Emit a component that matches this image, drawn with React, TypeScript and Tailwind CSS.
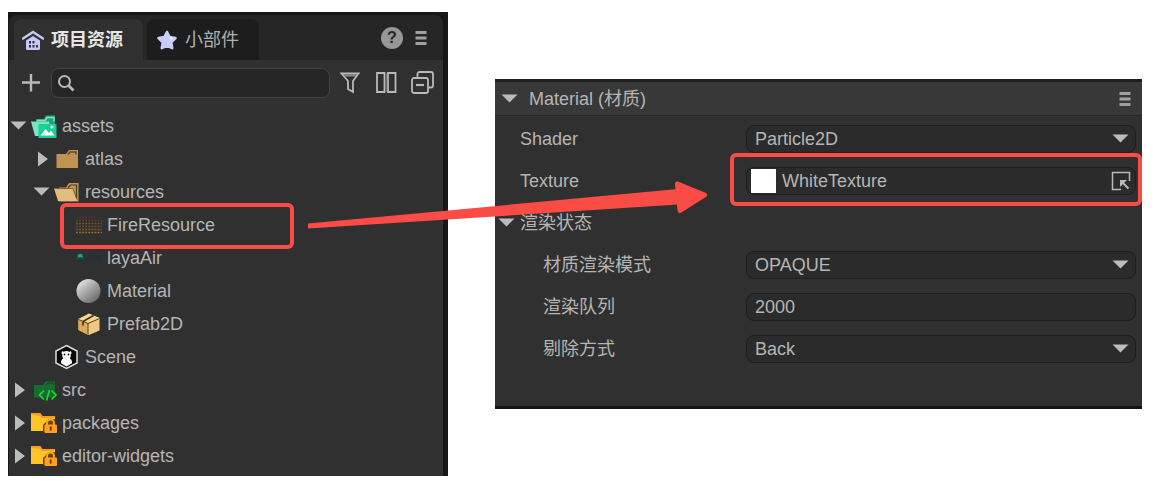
import { useState, type ReactNode } from "react";
import clsx from "clsx";

type IconName =
  | "assets"
  | "folder"
  | "folderOpen"
  | "texture"
  | "laya"
  | "material"
  | "prefab"
  | "scene"
  | "src"
  | "locked";

interface TreeItem {
  name: string;
  level: 0 | 1 | 2;
  icon: IconName;
  state?: "open" | "closed";
  marked?: boolean;
}

const TREE: TreeItem[] = [
  { name: "assets", level: 0, icon: "assets", state: "open" },
  { name: "atlas", level: 1, icon: "folder", state: "closed" },
  { name: "resources", level: 1, icon: "folderOpen", state: "open" },
  { name: "FireResource", level: 2, icon: "texture", marked: true },
  { name: "layaAir", level: 2, icon: "laya" },
  { name: "Material", level: 2, icon: "material" },
  { name: "Prefab2D", level: 2, icon: "prefab" },
  { name: "Scene", level: 1, icon: "scene" },
  { name: "src", level: 0, icon: "src", state: "closed" },
  { name: "packages", level: 0, icon: "locked", state: "closed" },
  { name: "editor-widgets", level: 0, icon: "locked", state: "closed" },
];

const INDENT = ["pl-px", "pl-6", "pl-[46px]"];

// Dotted sprite sheet preview: opacity of each row
const TEXTURE_ROWS = [0.2, 0.35, 0.6, 0.5, 0.7, 1];

function Triangle({ open }: { open: boolean }) {
  return (
    <svg className="h-5 w-5 shrink-0" viewBox="0 0 20 20" fill="#bcbcbc" aria-hidden="true">
      <path d={open ? "M.500 5.500h16l-8 8z" : "M5 2.500v15l10-7.500z"} />
    </svg>
  );
}

function FileIcon({ name }: { name: IconName }) {
  return (
    <svg className="h-[26px] w-[26px] shrink-0" viewBox="0 0 26 26" aria-hidden="true">
      {name === "assets" && (
        <>
          <path d="M5 21V6h8l2-3.500h9v18z" fill="#1fa57c" />
          <path d="M6 7.500h8l2-3h7v4" fill="none" stroke="#7fe6c4" strokeWidth="1.400" />
          <path d="M0 8.500h18l3 14.500H4z" fill="#7fe3c2" />
          <rect x="7.500" y="11" width="18" height="14" fill="#17cf97" />
          <path d="M9.500 22.500l5-6.500 3.500 4 2-2.500 3.500 5z" fill="#fff" />
          <circle cx="21" cy="14" r="1.600" fill="#fff" />
        </>
      )}
      {name === "folder" && (
        <>
          <path d="M2.500 22V8H12l3-4h9v18z" fill="#c09350" />
          <path d="M14 8.500l2-2.500h6v2.500" fill="none" stroke="#5a4526" strokeWidth="1.300" />
        </>
      )}
      {name === "folderOpen" && (
        <>
          <path d="M5 22.500V8.500h7l3-4.500h9.500v18.500z" fill="#c39856" />
          <path d="M14 9l2.500-3h6v13" fill="none" stroke="#4c3b22" strokeWidth="1.200" />
          <path d="M0 9.500h18.500l4.500 12.500H4z" fill="#e2bb7f" />
          <path d="M1 9.500h18l4 11" fill="none" stroke="#6d532c" strokeWidth=".8" />
        </>
      )}
      {name === "texture" &&
        TEXTURE_ROWS.map((opacity, i) => (
          <path
            key={i}
            d={`M0 ${5.5 + i * 3}H26`}
            stroke="#b06e15"
            strokeWidth="1.600"
            strokeDasharray="1.800 1.300"
            opacity={opacity}
          />
        ))}
      {name === "laya" && (
        <>
          <path d="M1.500 12.500a2.500 3.500 0 0 1 5.500 0z" fill="#12a87a" />
          <path d="M0 13.500h9" stroke="#1c4450" strokeWidth="1.500" />
          <path d="M13 11.500h12" stroke="#22294a" strokeWidth="2" strokeDasharray="3 1" />
          <path d="M13 14h12" stroke="#222a3a" strokeWidth="1" />
        </>
      )}
      {name === "material" && (
        <>
          <defs>
            <linearGradient id="sphere" x1="0.150" y1="0.100" x2="0.850" y2="0.900">
              <stop offset="0" stopColor="#e0e0e0" />
              <stop offset="0.500" stopColor="#a3a3a3" />
              <stop offset="1" stopColor="#6a6a6a" />
            </linearGradient>
          </defs>
          <circle cx="12.500" cy="13" r="12" fill="url(#sphere)" />
        </>
      )}
      {name === "prefab" && (
        <>
          <path d="M2.500 8L13 3l10.500 4v12.500L13 24 2.500 19z" fill="#efc983" />
          <path d="M2.500 8L12 12v12l-9.500-5z" fill="#dba95b" />
          <path d="M2.500 8L13 2.500 23.500 7 12 12z" fill="#f5d593" />
          <path d="M2.500 8.500L12 12.500l11.500-5M12 12.500V23.500" fill="none" stroke="#5b4320" />
          <path d="M7 10.500l10.500-6" stroke="#463318" strokeWidth="1.600" />
          <path d="M7 10.500v4" stroke="#463318" strokeWidth="1.600" />
        </>
      )}
      {name === "scene" && (
        <>
          <path d="M12.500 1.500l10.500 5.500v12l-10.500 5.500L2 19V7z" fill="#090909" stroke="#dcdcdc" strokeWidth="1.500" />
          <path
            d="M8 7.200l1.800.6a6 6 0 0 1 5.400 0l1.800-.6.6 2-1 1.300c.4 2-.1 3-.9 3.800 1.800 1 2.600 3 2.300 5L12.500 22.500 7 19.300c-.3-2 .5-4 2.300-5-.8-.8-1.300-1.800-.9-3.800l-1-1.300z"
            fill="#fff"
          />
          <circle cx="10.500" cy="10.500" r=".9" fill="#111" />
          <circle cx="14.500" cy="10.500" r=".9" fill="#111" />
        </>
      )}
      {name === "src" && (
        <>
          <path d="M3 20.500V8h9l2.500-3.500H24v16z" fill="#1a6b30" />
          <path d="M15 8l1.500-2h6v2" fill="none" stroke="#0e4a1e" />
          <path d="M13 13.500l-4.500 4.500 4.500 4.500M20.500 13.500l4.500 4.500-4.500 4.500M18.500 13l-3 10.500" fill="none" stroke="#13dd2f" strokeWidth="1.700" />
        </>
      )}
      {name === "locked" && (
        <>
          <path d="M0 21V3h9l2.500 3H24v15z" fill="#ffc527" />
          <path d="M0 4.500V3h9l2.500 3H24v2H11L9 6z" fill="#f5a01c" />
          <path d="M12 22V15l6-6h6v14z" fill="#6d4410" />
          <path d="M16 15v-2a3.500 3.500 0 0 1 7 0v2" fill="none" stroke="#ff9d22" strokeWidth="2" />
          <rect x="13.500" y="14.500" width="12.500" height="8.500" rx="1" fill="#ff9f24" />
          <path d="M19.700 16.500v4" stroke="#5d370b" strokeWidth="1.800" />
        </>
      )}
    </svg>
  );
}

function MenuIcon() {
  return (
    <svg className="h-4 w-3" viewBox="0 0 12 16" stroke="#a0a0a0" strokeWidth="2.800" aria-hidden="true">
      <path d="M.5 2.500h11M.5 8h11M.5 13.500h11" />
    </svg>
  );
}

function HouseIcon() {
  return (
    <svg className="h-[22px] w-[22px]" viewBox="0 0 22 22" aria-hidden="true">
      <path d="M1 9.500L11 3l10 6.500" fill="none" stroke="#c6c9f8" strokeWidth="2.400" strokeLinecap="round" />
      <path d="M4 11.500L11 7l7 4.500v8a1.500 1.500 0 0 1-1.500 1.500h-11A1.500 1.500 0 0 1 4 19.500z" fill="#c6c9f8" />
      <path d="M7 12h2v2.500H7zM10.500 12h2v2.500h-2zM7 16h2v2.500H7zM10.500 16h2v2.500h-2zM14 16h2v2.500h-2z" fill="#30313c" />
    </svg>
  );
}

function StarIcon() {
  return (
    <svg className="h-[22px] w-[22px]" viewBox="0 0 22 22" aria-hidden="true">
      <path
        d="M11 3l2.600 5 5.900 1-4.300 4.200 1 6L11 16.500l-5.200 2.700 1-6L2.500 9l5.900-1z"
        fill="#c9ccfc"
        stroke="#c9ccfc"
        strokeWidth="2.600"
        strokeLinejoin="round"
      />
      <path d="M14 8.500l2.500 1.500" stroke="#f4f4ff" strokeWidth="1.800" />
    </svg>
  );
}

function ToolButton({ label, children }: { label: string; children: ReactNode }) {
  return (
    <button type="button" aria-label={label} title={label} className="shrink-0">
      <svg className="h-6 w-6" viewBox="0 0 24 24" fill="none" stroke="#b9b9b9" strokeWidth="1.800" aria-hidden="true">
        {children}
      </svg>
    </button>
  );
}

function ResourcePanel() {
  const [query, setQuery] = useState("");

  return (
    <section className="border-t-3 border-r-5 border-l border-[#171717] bg-[#171717]">
      {/* Tabs */}
      <div className="flex items-end rounded-t-lg bg-[#262626] pt-1 pl-[5px]">
        <div role="tablist" className="flex flex-1 gap-1">
          <button
            type="button"
            role="tab"
            aria-selected="true"
            className="flex h-[41px] w-[129px] items-center gap-[7px] rounded-t-lg bg-[#303030] pl-2 font-bold text-[#e6e6e6]"
          >
            <HouseIcon />
            项目资源
          </button>
          <button
            type="button"
            role="tab"
            aria-selected="false"
            className="flex h-[41px] w-[112px] items-center gap-[7px] rounded-t-lg bg-[#1d1d1d] pl-[9px] text-[#b0b0b0]"
          >
            <StarIcon />
            小部件
          </button>
        </div>
        <div className="flex items-center gap-3 self-stretch pr-4 pb-1">
          <button
            type="button"
            aria-label="Help"
            className="flex h-[22px] w-[22px] items-center justify-center rounded-full bg-[#979797] text-base font-bold text-[#262626]"
          >
            ?
          </button>
          <button type="button" aria-label="Panel menu">
            <MenuIcon />
          </button>
        </div>
      </div>

      <div className="bg-[#303030] pb-1">
        {/* Toolbar */}
        <div className="flex items-center gap-3 pt-2 pr-2 pb-[11px] pl-[10px]">
          <ToolButton label="Create">
            <path d="M3 11.500h18M12 3v17.500" strokeWidth="2.400" />
          </ToolButton>
          <div className="flex min-w-0 flex-1 items-center gap-[9px]">
            <label className="-ml-1 flex h-[30px] min-w-0 flex-1 items-center gap-2 rounded-lg border border-[#414141] bg-[#262626] px-[5px]">
              <svg className="h-[18px] w-[18px] shrink-0" viewBox="0 0 18 18" fill="none" stroke="#b9b9b9" strokeWidth="2" aria-hidden="true">
                <circle cx="7.500" cy="7.500" r="5.500" />
                <path d="M11.500 11.500L16.500 16.500" strokeWidth="2.600" />
              </svg>
              <input
                type="text"
                aria-label="Search resources"
                value={query}
                onChange={(e) => setQuery(e.target.value)}
                className="min-w-0 flex-1 bg-transparent text-[#b5b5b5] outline-none"
              />
            </label>
            <div className="flex gap-3">
              <ToolButton label="Filter">
                <path d="M2.500 2.500h17L14 10v11l-5-3v-8z" />
                <path d="M4 3.500h14l-2 2H6z" fill="#8a8a8a" stroke="none" />
              </ToolButton>
              <ToolButton label="Split view">
                <path d="M2 2h7.500v19H2zM13 2h7.500v19H13z" />
                <path d="M11.200 2v19" stroke="#6a6a6a" />
              </ToolButton>
              <ToolButton label="Collapse all">
                <path d="M6.500 7V3a2 2 0 0 1 2-2H20a2 2 0 0 1 2 2v11.500a2 2 0 0 1-2 2h-2.500" />
                <rect x="1" y="7" width="16" height="15" rx="2" />
                <path d="M5 14h8" strokeWidth="2.200" />
              </ToolButton>
            </div>
          </div>
        </div>

        <ul>
          {TREE.map((item) => (
            <li key={item.name} className={clsx("relative flex h-[33px] items-center", INDENT[item.level])}>
              <button
                type="button"
                aria-expanded={item.state ? item.state === "open" : undefined}
                className="flex h-full flex-1 items-center text-left"
              >
                {item.state ? <Triangle open={item.state === "open"} /> : <span className="w-5" />}
                <span className="flex items-center gap-[5px] pl-px">
                  <FileIcon name={item.icon} />
                  {item.name}
                </span>
              </button>
              {item.marked && (
                <span className="pointer-events-none absolute -top-[5px] left-[51px] h-[46px] w-[234px] rounded-md border-4 border-[#f94c46]" />
              )}
            </li>
          ))}
        </ul>
      </div>
    </section>
  );
}

function PropertyRow({
  id,
  label,
  nested,
  children,
}: {
  id: string;
  label: string;
  nested?: boolean;
  children: ReactNode;
}) {
  return (
    <div className="grid h-[42px] grid-cols-[251px_1fr] items-center pr-[6px]">
      <label htmlFor={id} className={nested ? "pl-12" : "pl-[25px]"}>
        {label}
      </label>
      <div className="relative">{children}</div>
    </div>
  );
}

const FIELD =
  "h-7 w-full rounded-lg border border-[#1e1e1e] bg-[#2b2b2b] px-2 text-[#b5b5b5] outline-none";

function SelectField({ id, options }: { id: string; options: string[] }) {
  return (
    <>
      <select id={id} defaultValue={options[0]} className={clsx(FIELD, "block appearance-none")}>
        {options.map((option) => (
          <option key={option}>{option}</option>
        ))}
      </select>
      <span className="pointer-events-none absolute inset-y-0 right-1 flex items-center">
        <Triangle open />
      </span>
    </>
  );
}

// Arrow linking the texture resource to the texture slot
function LinkArrow() {
  return (
    <svg
      className="pointer-events-none absolute top-[93px] -left-[195px] h-[60px] w-[412px]"
      viewBox="0 0 412 60"
      fill="#f94c46"
      aria-hidden="true"
    >
      <path d="M8 48.500L378 14v15.500L8 53.500z" />
      <path d="M377.500 9l27 11-24.500 15.500z" stroke="#f94c46" strokeWidth="5" strokeLinejoin="round" />
    </svg>
  );
}

function MaterialPanel() {
  const [queue, setQueue] = useState("2000");

  return (
    <section className="relative mt-[67px] border-t-3 border-b-3 border-t-[#1f1f1f] border-b-[#141214] bg-[#303030]">
      <header className="flex h-[34px] items-center border-b border-[#262626] bg-[#383838] pr-[11px] pl-[6px]">
        <button type="button" aria-expanded="true" className="flex flex-1 items-center gap-2">
          <Triangle open />
          Material (材质)
        </button>
        <button type="button" aria-label="Material menu">
          <MenuIcon />
        </button>
      </header>

      <div className="pt-[2px] pb-9">
        <PropertyRow id="shader" label="Shader">
          <SelectField id="shader" options={["Particle2D"]} />
        </PropertyRow>
        <PropertyRow id="texture" label="Texture">
          <button id="texture" type="button" className={clsx(FIELD, "flex items-center gap-[6px] pl-1")}>
            <span className="h-6 w-[25px] bg-white" />
            <span className="flex-1 text-left">WhiteTexture</span>
            <svg className="-mr-1 h-5 w-5" viewBox="0 0 20 20" fill="none" stroke="#b9b9b9" strokeWidth="1.500" aria-hidden="true">
              <path d="M10 18.500H1.500v-17h17V10" />
              <path d="M11 11l6.500 6.500" strokeWidth="1.800" />
              <path d="M9 9h7l-7 7z" fill="#b9b9b9" stroke="none" />
            </svg>
          </button>
          <span className="pointer-events-none absolute -top-[14px] -right-[6px] -bottom-[11px] -left-4 rounded-md border-4 border-[#f94c46]" />
        </PropertyRow>
        <button type="button" aria-expanded="true" className="flex h-[42px] items-center gap-[2px] pl-[3px]">
          <Triangle open />
          渲染状态
        </button>
        <PropertyRow id="mode" label="材质渲染模式" nested>
          <SelectField id="mode" options={["OPAQUE"]} />
        </PropertyRow>
        <PropertyRow id="queue" label="渲染队列" nested>
          <input
            id="queue"
            type="text"
            value={queue}
            onChange={(e) => setQueue(e.target.value)}
            className={clsx(FIELD, "block")}
          />
        </PropertyRow>
        <PropertyRow id="cull" label="剔除方式" nested>
          <SelectField id="cull" options={["Back"]} />
        </PropertyRow>
      </div>
      <LinkArrow />
    </section>
  );
}

export default function App() {
  return (
    <main className="grid min-h-screen grid-cols-[440fr_647fr] items-start gap-[47px] bg-white pt-3 pr-6 pl-2 font-['Liberation_Sans','Noto_Sans_CJK_SC',sans-serif] text-lg leading-6 text-[#b5b5b5]">
      <ResourcePanel />
      <MaterialPanel />
    </main>
  );
}
